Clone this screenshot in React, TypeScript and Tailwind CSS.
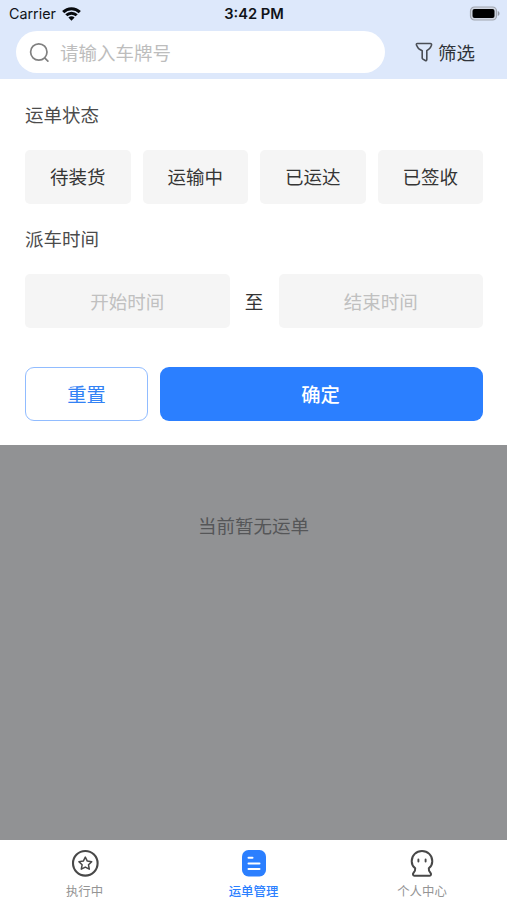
import React from 'react';

const statuses = ['待装货', '运输中', '已运达', '已签收'];

function StatusBar() {
  return (
    <div className="grid h-[27px] grid-cols-3 items-center pl-[9px] pr-[7px] text-[14px] leading-[27px] text-[#101318]">
      <div className="flex items-center gap-[6px]">
        <span className="text-[14.3px]">Carrier</span>
        <svg width="19" height="14" viewBox="0 0 19 14" fill="none" stroke="#080a0d" strokeWidth="3">
          <path d="M1.2 5.1C5.8.5 13.2.5 17.8 5.1" />
          <path d="M4.3 8.3c2.9-2.9 7.5-2.9 10.4 0" />
          <path d="M9.5 13.7 6.4 10.6c1.7-1.7 4.5-1.7 6.2 0Z" fill="#080a0d" stroke="none" />
        </svg>
      </div>
      <div className="whitespace-nowrap pr-[1px] pt-[2px] text-center text-[14.7px] font-semibold leading-[25px]">3:42 PM</div>
      <div className="flex justify-end">
        <svg width="31" height="15" viewBox="0 0 31 15">
          <rect x="1.5" y="1" width="26" height="13" rx="4" fill="#d0d6e2" stroke="#a1a6b0" strokeWidth="1.2" />
          <rect x="3.5" y="3" width="22" height="9" rx="2" fill="#000" />
          <path d="M28.8 5c2.3.8 2.3 4.2 0 5Z" fill="#9499a3" />
        </svg>
      </div>
    </div>
  );
}

function SearchRow() {
  return (
    <div className="flex pl-4 pt-1">
      <div className="flex h-[42px] w-[369px] items-center rounded-full bg-white pl-[13px]">
        <svg width="21" height="21" viewBox="0 0 21 21" fill="none" stroke="#808080" strokeWidth="1.7" strokeLinecap="round">
          <circle cx="9.8" cy="10" r="8.2" />
          <path d="m15.9 16.1 3 3" />
        </svg>
        <span className="pl-[10px] pt-[2px] text-[18.5px] leading-none text-[#bdbdbd]">请输入车牌号</span>
      </div>
      <div className="flex items-center gap-[5px] pl-[30px]">
        <svg width="18" height="20" viewBox="0 0 18 20" fill="none" stroke="#494d54" strokeWidth="1.6" strokeLinejoin="round">
          <path d="M2.4 1.5h12.9c1.1 0 1.6 1 1.1 2l-.8 1.6c-.4.9-1.1 1.6-2 2.2l-1.8 1.3v9c0 .9-.7 1.4-1.5.9l-2.4-1.4c-.5-.3-.7-.7-.7-1.2V8.8L4.5 7.3c-.9-.7-1.5-1.3-1.9-2.2l-1.1-2c-.4-.8.1-1.6.9-1.6Z" />
        </svg>
        <span className="pt-[2px] text-[18.5px] leading-none text-[#30343a]">筛选</span>
      </div>
    </div>
  );
}

function FilterPanel() {
  return (
    <section className="h-[366px] bg-white pl-[25px] pr-[24px] pt-[22px] text-[18.5px]">
      <h2 className="h-[28px] leading-[28px] text-[#4b4b4b]">运单状态</h2>
      <div className="mt-[21px] grid grid-cols-4 gap-3">
        {statuses.map((status) => (
          <button key={status} className="h-[54px] rounded-[5px] bg-[#f5f5f5] pt-[2px] text-[#353535]">{status}</button>
        ))}
      </div>
      <h2 className="mt-[21px] h-[28px] leading-[28px] text-[#4b4b4b]">派车时间</h2>
      <div className="mt-[21px] flex items-center">
        <button className="h-[54px] flex-1 rounded-[5px] bg-[#f5f5f5] pt-[3px] text-[#c0c0c0]">开始时间</button>
        <span className="w-[49px] pt-[3px] text-center text-[#333]">至</span>
        <button className="h-[54px] flex-1 rounded-[5px] bg-[#f5f5f5] pt-[3px] text-[#c0c0c0]">结束时间</button>
      </div>
      <div className="mt-[39px] flex gap-3 text-[19.3px]">
        <button className="h-[54px] w-[123px] rounded-[9px] border border-[#91bcff] pt-[3px] text-[#3282f5]">重置</button>
        <button className="h-[54px] flex-1 rounded-[9px] bg-[#2b7fff] pr-[2px] pt-[3px] font-medium text-white">确定</button>
      </div>
    </section>
  );
}

function TabBar() {
  return (
    <nav className="grid h-[60px] grid-cols-3 bg-white text-[12.4px] leading-[18px] text-[#949494]">
      <div className="flex flex-col items-center pt-[9px]">
        <svg width="28" height="28" viewBox="0 0 28 28" fill="none" stroke="#484848" strokeLinejoin="round">
          <circle cx="14.3" cy="14.3" r="12.3" strokeWidth="2.1" />
          <path d="m14.3 8.1 2 4 4.4.6-3.2 3.1.8 4.4-4-2.1-4 2.1.8-4.4-3.2-3.1 4.4-.6Z" strokeWidth="1.5" />
        </svg>
        <span className="mt-[6px]">执行中</span>
      </div>
      <div className="flex flex-col items-center pt-[9px] font-medium text-[#2b7fff]">
        <svg width="28" height="28" viewBox="0 0 28 28" fill="none">
          <rect x="2" y="1" width="24" height="26.5" rx="6.5" fill="#2b7fff" />
          <path d="M8.5 8.7h4M8.5 14.5h11M8.5 20h11" stroke="white" strokeWidth="2" strokeLinecap="round" />
        </svg>
        <span className="mt-[6px]">运单管理</span>
      </div>
      <div className="flex flex-col items-center pr-[1px] pt-[9px]">
        <svg width="28" height="28" viewBox="0 0 28 28" fill="none" stroke="#484848" strokeWidth="2" strokeLinecap="round" strokeLinejoin="round">
          <path d="M7.2 19.3C5 17.5 3.7 15 3.7 12.2 3.7 6.3 8.3 2 14 2s10.3 4.3 10.3 10.2c0 2.8-1.3 5.3-3.5 7.1-.2 1.8.2 3 1.6 4.5 1.2 1.3.6 2.9-.8 2.9H6.4c-1.4 0-2-1.6-.8-2.9 1.4-1.5 1.8-2.7 1.6-4.5Z" />
          <path d="M10.4 10.5v2M17.6 10.5v2" strokeWidth="1.9" />
        </svg>
        <span className="mt-[6px]">个人中心</span>
      </div>
    </nav>
  );
}

export default function App() {
  return (
    <div className="flex h-[900px] w-[507px] flex-col overflow-hidden bg-white font-['Inter','Noto_Sans_CJK_SC',sans-serif]">
      <header className="h-[79px] shrink-0 bg-[#dde8fb]">
        <StatusBar />
        <SearchRow />
      </header>
      <FilterPanel />
      <main className="flex-1 bg-[#919294] pt-[67px] text-center text-[18.5px] leading-[28px] text-[#555658]">当前暂无运单</main>
      <TabBar />
    </div>
  );
}
